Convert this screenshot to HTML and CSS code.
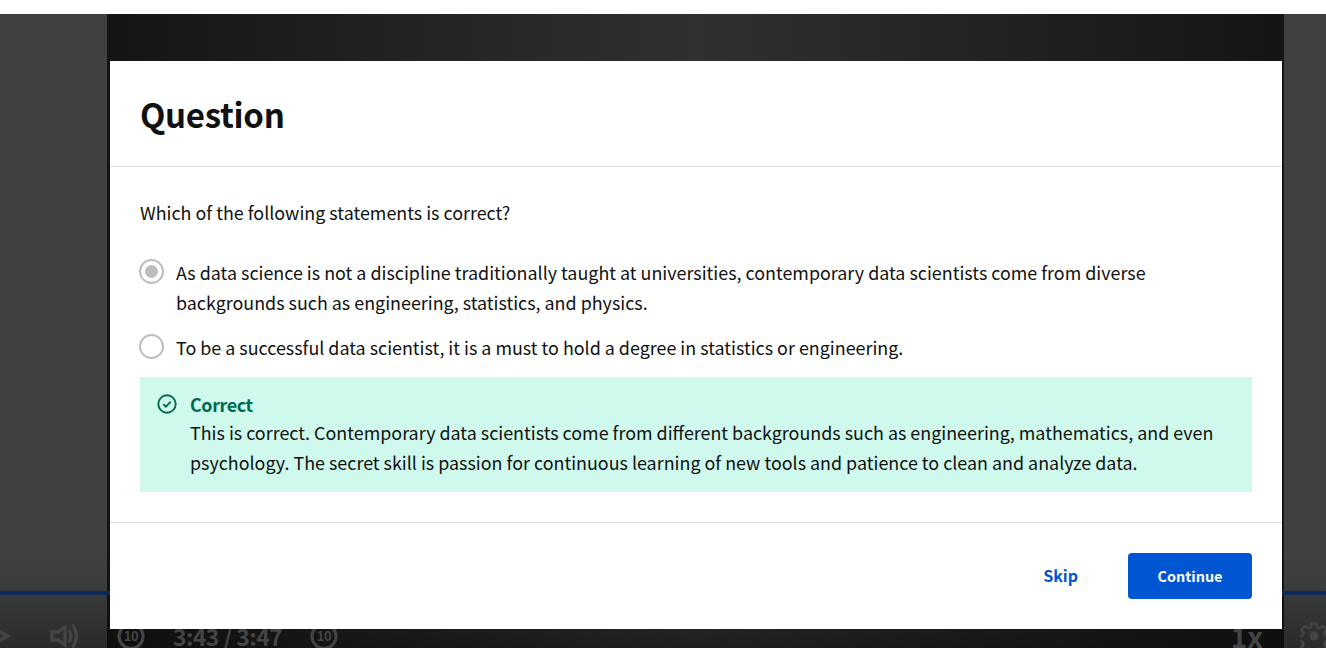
FILE: index.html
```html
<!DOCTYPE html>
<html lang="en">
<head>
    <meta charset="UTF-8">
    <meta name="viewport" content="width=device-width, initial-scale=1.0">
    <title>Question</title>
    <link rel="stylesheet" href="styles.css">
</head>
<body>
    <div class="player">
        <div class="dim"></div>
        <div class="progress"></div>
        <div class="controls">
            <svg class="icon play" viewBox="0 0 26 26"><path d="M3 3l19 10L3 23" fill="none" stroke="currentColor" stroke-width="3.400"/></svg>
            <svg class="icon volume" viewBox="0 0 28 28"><path d="M2 10h6l7-5v18l-7-5H2z" fill="none" stroke="currentColor" stroke-width="3.400"/><path d="M19 8c2.500 3.500 2.500 8.500 0 12M22.500 2.500c5 6.500 5 16.500 0 23" fill="none" stroke="currentColor" stroke-width="3.400"/></svg>
            <span class="skip-icon back">
                <svg viewBox="0 0 28 28"><path d="M9 3.500A12 12 0 1 0 19 3.500" fill="none" stroke="currentColor" stroke-width="3.200"/><path d="M14 0v6" stroke="currentColor" stroke-width="3.200"/></svg>
                <b>10</b>
            </span>
            <span class="time">3:43 / 3:47</span>
            <span class="skip-icon forward">
                <svg viewBox="0 0 28 28"><path d="M9 3.500A12 12 0 1 0 19 3.500" fill="none" stroke="currentColor" stroke-width="3.200"/><path d="M14 0v6" stroke="currentColor" stroke-width="3.200"/></svg>
                <b>10</b>
            </span>
            <span class="speed">1x</span>
            <svg class="icon gear" viewBox="0 0 28 28"><path d="M11.500 1.500h5l.8 3.600 2.500 1 3.100-2 3.500 3.500-2 3.100 1 2.500 3.600.8v5l-3.600.8-1 2.500 2 3.100-3.500 3.500-3.100-2-2.500 1-.8 3.600h-5l-.8-3.600-2.500-1-3.100 2-3.500-3.500 2-3.100-1-2.500-3.600-.8v-5l3.600-.8 1-2.500-2-3.100 3.500-3.500 3.100 2 2.500-1z" fill="none" stroke="currentColor" stroke-width="2.600"/><circle cx="14" cy="14" r="4.500" fill="currentColor"/></svg>
        </div>

        <div class="modal">
            <div class="modal-head">
                <h2>Question</h2>
            </div>
            <div class="modal-body">
                <p class="prompt">Which of the following statements is correct?</p>
                <div class="option">
                    <span class="radio checked"></span>
                    <p>As data science is not a discipline traditionally taught at universities, contemporary data scientists come from diverse backgrounds such as engineering, statistics, and physics.</p>
                </div>
                <div class="option">
                    <span class="radio"></span>
                    <p>To be a successful data scientist, it is a must to hold a degree in statistics or engineering.</p>
                </div>
                <div class="feedback">
                    <svg class="check" viewBox="0 0 20 20"><circle cx="10" cy="10" r="8.700" fill="none" stroke="currentColor" stroke-width="1.900"/><path d="M6.300 10.200l2.600 2.500 4.800-5" fill="none" stroke="currentColor" stroke-width="1.900"/></svg>
                    <div>
                        <div class="feedback-title">Correct</div>
                        <p>This is correct. Contemporary data scientists come from different backgrounds such as engineering, mathematics, and even psychology. The secret skill is passion for continuous learning of new tools and patience to clean and analyze data.</p>
                    </div>
                </div>
            </div>
            <div class="modal-foot">
                <button class="btn-skip">Skip</button>
                <button class="btn-continue">Continue</button>
            </div>
        </div>
    </div>
</body>
</html>
```

FILE: styles.css
```css
*{
    margin: 0;
    padding: 0;
    box-sizing: border-box;
}
body{
    padding-top: 14px;
    background-color: #fff;
    overflow: hidden;
    font-family: "Noto Sans CJK SC", "Noto Sans", sans-serif;
    color: #111;
}
.player{
    position: relative;
    height: 634px;
    overflow: hidden;
    display: flex;
    flex-direction: column;
    justify-content: flex-end;
    background: linear-gradient(#3f4042 0, #3f4042 85%, #3b3c3e 90%, #2a2a2a 100%);
}
.dim{
    position: absolute;
    top: 0;
    bottom: 0;
    left: 107px;
    right: 42px;
    background: linear-gradient(90deg, rgba(0,0,0,.68) 0, rgba(0,0,0,.25) 50%, rgba(0,0,0,.68) 100%);
}
.progress{
    position: relative;
    height: 4px;
    flex: none;
    background-color: #0c2a57;
}
.controls{
    position: relative;
    flex: none;
    height: 53px;
    padding-top: 28px;
    display: flex;
    align-items: center;
    color: #444;
}
.icon{
    display: block;
    flex: none;
}
.play{
    width: 26px;
    height: 26px;
    margin-left: -14px;
}
.volume{
    width: 28px;
    height: 28px;
    margin-left: 38px;
}
.skip-icon{
    position: relative;
    flex: none;
    width: 28px;
    height: 28px;
    display: flex;
    align-items: center;
    justify-content: center;
}
.skip-icon svg{
    position: absolute;
    inset: 0;
}
.skip-icon b{
    font-size: 13px;
    line-height: 1;
    letter-spacing: -.5px;
}
.back{
    margin-left: 39px;
}
.time{
    margin-left: 28px;
    font-size: 23px;
    font-weight: 700;
    line-height: 24px;
    letter-spacing: -.6px;
    white-space: nowrap;
    width: 137px;
}
.speed{
    margin-left: auto;
    font-size: 28px;
    font-weight: 700;
    line-height: 24px;
}
.gear{
    width: 28px;
    height: 28px;
    margin-left: 37px;
    margin-right: -2px;
}
.modal{
    position: absolute;
    top: 47px;
    left: 110px;
    width: 1172px;
    height: 568px;
    background-color: #fff;
    display: flex;
    flex-direction: column;
}
.modal-head{
    height: 106px;
    padding: 0 30px;
    border-bottom: 1px solid #e0e0e0;
    display: flex;
    align-items: center;
}
h2{
    font-size: 33px;
    font-weight: 700;
    line-height: 46px;
    letter-spacing: -.3px;
    color: #111;
}
.modal-body{
    padding: 30px 30px 30px;
    border-bottom: 1px solid #e0e0e0;
    height: 356px;
    font-size: 17.9px;
    line-height: 30px;
}
.prompt{
    margin-bottom: 30px;
}
.option{
    display: flex;
    gap: 12px;
    margin-bottom: 15px;
}
.radio{
    flex: none;
    width: 25px;
    height: 25px;
    margin: 2px 0 0 -1px;
    border: 2px solid #bdbdbd;
    border-radius: 50%;
    display: flex;
    align-items: center;
    justify-content: center;
}
.radio.checked::after{
    content: "";
    width: 13px;
    height: 13px;
    border-radius: 50%;
    background-color: #bdbdbd;
}
.feedback{
    display: flex;
    gap: 13px;
    height: 115px;
    padding: 14px 30px 0 17px;
    background-color: #cef9ec;
}
.check{
    flex: none;
    width: 20px;
    height: 20px;
    margin-top: 3px;
    color: #00694d;
}
.feedback-title{
    font-weight: 700;
    letter-spacing: -.4px;
    color: #00694d;
    line-height: 26px;
}
.modal-foot{
    flex: 1;
    padding: 30px;
    display: flex;
    justify-content: flex-end;
    align-items: flex-start;
}
button{
    font-family: inherit;
    font-weight: 700;
    border: none;
    height: 46px;
    padding-bottom: 2px;
}
.btn-skip{
    background: none;
    color: #0056d2;
    font-size: 16px;
    margin-right: 50px;
}
.btn-continue{
    width: 124px;
    background-color: #0056d2;
    color: #fff;
    border-radius: 4px;
    font-size: 14.4px;
}
```
